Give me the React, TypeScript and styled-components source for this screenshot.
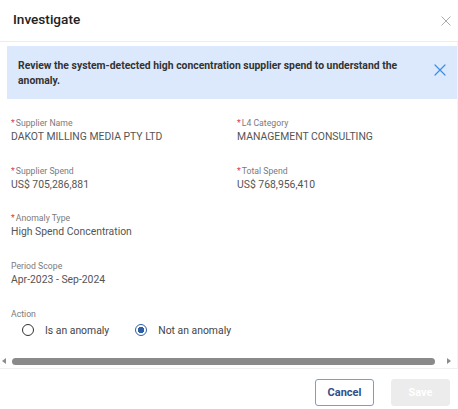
import React, { useState } from 'react'
import styled, { createGlobalStyle } from 'styled-components'

const GlobalStyle = createGlobalStyle`
  html, body {
    margin: 0;
    padding: 0;
    background: #ffffff;
  }
  body {
    font-family: Roboto, 'Liberation Sans', Arial, sans-serif;
  }
`

type Field = {
  label: string
  value: string
  required?: boolean
}

const fields: Field[] = [
  { label: 'Supplier Name', value: 'DAKOT MILLING MEDIA PTY LTD', required: true },
  { label: 'L4 Category', value: 'MANAGEMENT CONSULTING', required: true },
  { label: 'Supplier Spend', value: 'US$ 705,286,881', required: true },
  { label: 'Total Spend', value: 'US$ 768,956,410', required: true },
  { label: 'Anomaly Type', value: 'High Spend Concentration', required: true },
  { label: '', value: '' },
  { label: 'Period Scope', value: 'Apr-2023 - Sep-2024' },
]

const CloseIcon = ({ size, color, stroke }: { size: number; color: string; stroke: number }) => (
  <svg width={size} height={size} viewBox='0 0 12 12' fill='none'>
    <path d='M1 1L11 11M11 1L1 11' stroke={color} strokeWidth={stroke} strokeLinecap='round' />
  </svg>
)

const App = () => {
  const [action, setAction] = useState('not')

  return (
    <>
      <GlobalStyle />
      <Dialog>
        <Header>
          <Title>Investigate</Title>
          <IconButton aria-label='close'>
            <CloseIcon size={10} color='#a3a3a3' stroke={1.1} />
          </IconButton>
        </Header>
        <Body>
          <Banner>
            <BannerText>
              Review the system-detected high concentration supplier spend to understand the anomaly.
            </BannerText>
            <IconButton aria-label='dismiss'>
              <CloseIcon size={12} color='#3b8de0' stroke={1.2} />
            </IconButton>
          </Banner>
          <Fields>
            {fields.map((f, i) => (
              <FieldBlock key={i}>
                {f.label && (
                  <Label>
                    {f.required && <Req>*</Req>}
                    {f.label}
                  </Label>
                )}
                {f.value && <Value>{f.value}</Value>}
              </FieldBlock>
            ))}
            <ActionBlock>
              <Label>Action</Label>
              <RadioRow>
                <RadioOption onClick={() => setAction('is')}>
                  <RadioCircle $checked={action === 'is'} />
                  Is an anomaly
                </RadioOption>
                <RadioOption onClick={() => setAction('not')}>
                  <RadioCircle $checked={action === 'not'} />
                  Not an anomaly
                </RadioOption>
              </RadioRow>
            </ActionBlock>
          </Fields>
          <ScrollBar>
            <Arrow $dir='left' />
            <Thumb />
            <Arrow $dir='right' />
          </ScrollBar>
        </Body>
        <Footer>
          <Button $variant='outline'>Cancel</Button>
          <Button $variant='disabled' disabled>
            Save
          </Button>
        </Footer>
      </Dialog>
    </>
  )
}

export default App

const Dialog = styled.div`
  width: 458px;
  height: 409px;
  display: flex;
  flex-direction: column;
  background: #ffffff;
  overflow: hidden;
`
const Header = styled.div`
  height: 41px;
  flex-shrink: 0;
  display: flex;
  align-items: center;
  justify-content: space-between;
  padding: 0 0 0 13px;
  border-bottom: 1px solid #ededed;
`
const Title = styled.div`
  font-size: 13.6px;
  font-weight: 500;
  color: #222222;
  margin-top: -3px;
`
const IconButton = styled.button`
  border: none;
  background: transparent;
  padding: 0;
  width: 24px;
  height: 24px;
  display: flex;
  align-items: center;
  justify-content: center;
  cursor: pointer;
`
const Body = styled.div`
  flex: 1;
  display: flex;
  flex-direction: column;
  padding: 4px 0 0 7px;
  border-right: 1px solid #f3f3f3;
`
const Banner = styled.div`
  display: flex;
  align-items: flex-start;
  background: #dce9fc;
  padding: 12px 5px 11px 11px;
  min-height: 30px;
`
const BannerText = styled.div`
  flex: 1;
  font-size: 10.4px;
  line-height: 15px;
  font-weight: 700;
  color: #333333;
  padding-right: 12px;
`
const Fields = styled.div`
  display: grid;
  grid-template-columns: 226px 1fr;
  row-gap: 19.5px;
  padding: 18px 0 0 4px;
`
const FieldBlock = styled.div`
  min-height: 28px;
`
const Label = styled.div`
  font-size: 8.7px;
  line-height: 12px;
  color: #7a7a7a;
`
const Req = styled.span`
  color: #e03a3a;
  margin-right: 1px;
`
const Value = styled.div`
  font-size: 10.4px;
  line-height: 16px;
  color: #555555;
`
const ActionBlock = styled.div`
  grid-column: 1 / span 2;
  margin-top: 1px;
`
const RadioRow = styled.div`
  display: flex;
  align-items: center;
  height: 20px;
  padding-left: 11px;
  gap: 26px;
`
const RadioOption = styled.label`
  display: flex;
  align-items: center;
  gap: 11px;
  font-size: 10.4px;
  color: #444444;
  cursor: pointer;
`
const RadioCircle = styled.span<{ $checked: boolean }>`
  width: 12px;
  height: 12px;
  box-sizing: border-box;
  border-radius: 50%;
  border: 1.5px solid ${(p) => (p.$checked ? '#2f5ea8' : '#333333')};
  background: ${(p) => (p.$checked ? 'radial-gradient(circle, #2f5ea8 0 3px, #ffffff 3.5px)' : '#ffffff')};
`
const ScrollBar = styled.div`
  margin-top: auto;
  margin-left: -7px;
  height: 12px;
  display: flex;
  align-items: center;
  padding: 0 6px 1px 2px;
  gap: 6px;
  border-bottom: 1px solid #f0f0f0;
`
const Thumb = styled.div`
  flex: 1;
  height: 7px;
  border-radius: 4px;
  background: #8a8a8a;
  margin-right: 6px;
`
const Arrow = styled.div<{ $dir: 'left' | 'right' }>`
  width: 0;
  height: 0;
  border-top: 3.5px solid transparent;
  border-bottom: 3.5px solid transparent;
  ${(p) => (p.$dir === 'left' ? 'border-right: 4px solid #8c8c8c;' : 'border-left: 4px solid #8c8c8c;')}
`
const Footer = styled.div`
  height: 40px;
  flex-shrink: 0;
  display: flex;
  justify-content: flex-end;
  align-items: flex-start;
  gap: 17px;
  padding: 10px 8px 0 0;
  box-sizing: border-box;
`
const Button = styled.button<{ $variant: 'outline' | 'disabled' }>`
  width: 59px;
  height: 27px;
  border-radius: 3px;
  font-family: Roboto, 'Liberation Sans', Arial, sans-serif;
  font-size: 11px;
  font-weight: 700;
  cursor: ${(p) => (p.$variant === 'disabled' ? 'default' : 'pointer')};
  border: 1px solid ${(p) => (p.$variant === 'outline' ? '#7f9bc9' : '#ececec')};
  background: ${(p) => (p.$variant === 'outline' ? '#ffffff' : '#ececec')};
  color: ${(p) => (p.$variant === 'outline' ? '#2f4f8a' : '#ffffff')};
`
